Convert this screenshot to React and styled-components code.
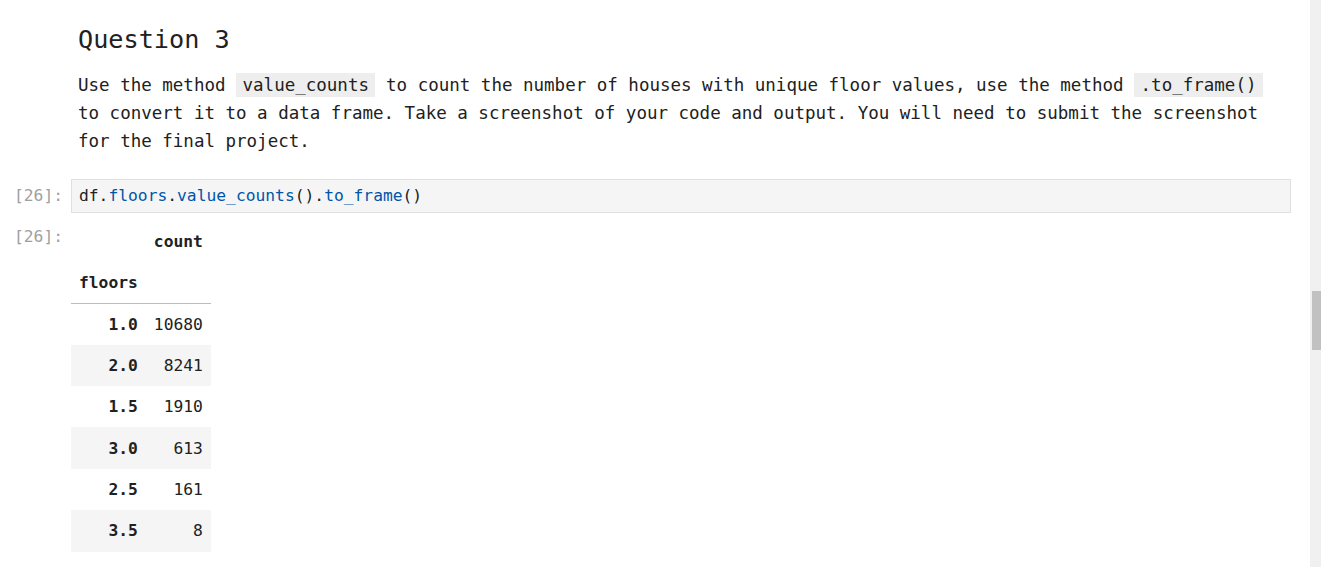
import React from 'react';
import styled, { createGlobalStyle } from 'styled-components';

const GlobalStyle = createGlobalStyle`
  html, body { margin: 0; padding: 0; background: #ffffff; }
  body { font-family: "DejaVu Sans Mono", "Liberation Mono", monospace; color: #212121; overflow: hidden; }
`;

const Page = styled.div`
  display: flex;
  width: 1321px;
  height: 567px;
  overflow: hidden;
`;

const Notebook = styled.div`
  flex: 1;
  display: flex;
  flex-direction: column;
  padding-right: 19px;
`;

const Cell = styled.div`
  display: flex;
  gap: 8px;
  margin-top: ${p => p.top || 0}px;
`;

const Prompt = styled.div`
  width: 63px;
  flex: none;
  text-align: right;
  font-size: 16.3px;
  line-height: 24px;
  padding-top: ${p => p.pad || 0}px;
  color: #a0a0a0;
  visibility: ${p => (p.empty ? 'hidden' : 'visible')};
`;

const Content = styled.div`
  flex: 1;
  min-width: 0;
`;

const Markdown = styled.div`
  padding: 0 20px 0 7px;
`;

const Heading = styled.h2`
  margin: 25px 0 16px;
  font-size: 25.2px;
  line-height: 30px;
  font-weight: normal;
`;

const Para = styled.p`
  margin: 0;
  font-size: 17.5px;
  line-height: 28px;
`;

const InlineCode = styled.code`
  font-family: inherit;
  font-size: inherit;
  background: #eeeeee;
  padding: 2px 6.5px;
`;

const CodeBox = styled.div`
  background: #f5f5f5;
  border: 1px solid #e0e0e0;
  padding: 4px 7px;
  font-size: 16.3px;
  line-height: 24px;
  white-space: pre;
`;

const Tok = styled.span`
  color: ${p => (p.blue ? '#0055aa' : '#212121')};
`;

const Table = styled.table`
  border-collapse: collapse;
  font-size: 16.3px;
  color: #212121;
  margin-top: 0.5px;
`;

const Row = styled.tr`
  height: 41.4px;
  background: ${p => (p.striped ? '#f5f5f5' : 'transparent')};
  border-bottom: ${p => (p.rule ? '1px solid #bdbdbd' : 'none')};
`;

const Th = styled.th`
  padding: 0 8px;
  text-align: ${p => (p.left ? 'left' : 'right')};
  font-weight: bold;
  white-space: nowrap;
`;

const Td = styled.td`
  padding: 0 8px;
  text-align: right;
  white-space: nowrap;
`;

const ScrollTrack = styled.div`
  width: 11px;
  flex: none;
  background: #f0f0f0;
  display: flex;
  justify-content: flex-end;
  padding-top: 291px;
  box-sizing: border-box;
`;

const ScrollThumb = styled.div`
  width: 9px;
  height: 59px;
  background: #c1c1c1;
`;

const rows = [
  ['1.0', '10680'],
  ['2.0', '8241'],
  ['1.5', '1910'],
  ['3.0', '613'],
  ['2.5', '161'],
  ['3.5', '8'],
];

export default function App() {
  return (
    <>
      <GlobalStyle />
      <Page>
        <Notebook>
          <Cell>
            <Prompt empty>[ ]:</Prompt>
            <Content>
              <Markdown>
                <Heading>Question 3</Heading>
                <Para>
                  Use the method <InlineCode>value_counts</InlineCode> to count the number of houses with unique floor values, use the method <InlineCode>.to_frame()</InlineCode> to convert it to a data frame. Take a screenshot of your code and output. You will need to submit the screenshot for the final project.
                </Para>
              </Markdown>
            </Content>
          </Cell>

          <Cell top={24}>
            <Prompt pad={5}>[26]:</Prompt>
            <Content>
              <CodeBox>
                <Tok>df.</Tok><Tok blue>floors</Tok><Tok>.</Tok><Tok blue>value_counts</Tok><Tok>().</Tok><Tok blue>to_frame</Tok><Tok>()</Tok>
              </CodeBox>
            </Content>
          </Cell>

          <Cell top={7}>
            <Prompt pad={5}>[26]:</Prompt>
            <Content>
              <Table>
                <thead>
                  <Row>
                    <Th></Th>
                    <Th>count</Th>
                  </Row>
                  <Row rule>
                    <Th left>floors</Th>
                    <Th></Th>
                  </Row>
                </thead>
                <tbody>
                  {rows.map(([k, v], i) => (
                    <Row key={k} striped={i % 2 === 1}>
                      <Th>{k}</Th>
                      <Td>{v}</Td>
                    </Row>
                  ))}
                </tbody>
              </Table>
            </Content>
          </Cell>
        </Notebook>
        <ScrollTrack>
          <ScrollThumb />
        </ScrollTrack>
      </Page>
    </>
  );
}
